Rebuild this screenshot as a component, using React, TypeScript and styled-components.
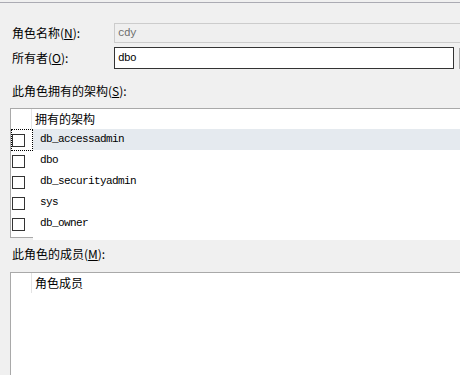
import React from "react";
import styled, { createGlobalStyle } from "styled-components";

const GlobalStyle = createGlobalStyle`
  html, body {
    margin: 0;
    padding: 0;
    background: #f0f0f0;
  }
  body {
    font-family: "Noto Sans CJK SC", "Noto Sans", sans-serif;
    font-size: 12px;
    color: #000;
  }
`;

const Window = styled.div`
  width: 460px;
  height: 375px;
  overflow: hidden;
  padding-top: 2px;
  box-sizing: border-box;
  background: #f0f0f0;
`;

const Panel = styled.div`
  border-top: 1px solid #ababb3;
  height: 100%;
  display: flex;
  flex-direction: column;
  padding-left: 10px;
`;

const FormGrid = styled.div`
  display: grid;
  grid-template-columns: 102px 1fr;
  row-gap: 4px;
  padding: 20px 0 0 2px;
  align-items: center;
`;

const Label = styled.label`
  line-height: 16px;
  white-space: nowrap;
`;

const SectionLabel = styled.div<{ $top: number; $bottom: number }>`
  line-height: 16px;
  padding-left: 2px;
  margin-top: ${(p) => p.$top}px;
  margin-bottom: ${(p) => p.$bottom}px;
`;

const FieldRow = styled.div`
  display: flex;
  align-items: flex-start;
  gap: 5px;
`;

const TextField = styled.div<{ $disabled?: boolean }>`
  box-sizing: border-box;
  height: ${(p) => (p.$disabled ? 20 : 22)}px;
  width: ${(p) => (p.$disabled ? "400px" : "340px")};
  flex: none;
  border: 1px solid ${(p) => (p.$disabled ? "#cccccc" : "#333333")};
  background: ${(p) => (p.$disabled ? "#efefef" : "#ffffff")};
  color: ${(p) => (p.$disabled ? "#6d6d6d" : "#000")};
  font-family: "Liberation Mono", "DejaVu Sans Mono", monospace;
  font-size: 11px;
  letter-spacing: -0.6px;
  line-height: ${(p) => (p.$disabled ? 18 : 20)}px;
  padding-left: 3px;
`;

const BrowseButton = styled.div`
  width: 24px;
  height: 21px;
  margin-top: 1px;
  box-sizing: border-box;
  border: 1px solid #adadad;
  background: #e1e1e1;
  flex: none;
`;

const Grid = styled.div<{ $fill?: boolean }>`
  box-sizing: border-box;
  width: 456px;
  border: 1px solid #a9a9a9;
  background: #fff;
  flex: ${(p) => (p.$fill ? "1" : "none")};
`;

const HeaderRow = styled.div`
  display: grid;
  grid-template-columns: 21px 1fr;
  height: 20px;
`;

const HeaderSpacer = styled.div`
  border-right: 1px solid #e3e3e3;
`;

const HeaderCell = styled.div`
  padding-left: 3px;
  line-height: 20px;
  white-space: nowrap;
`;

const Row = styled.div<{ $stub?: boolean }>`
  display: grid;
  grid-template-columns: 22px 1fr;
  height: ${(p) => (p.$stub ? 3 : 21)}px;
`;

const CheckCell = styled.div<{ $focused?: boolean }>`
  box-sizing: border-box;
  border: 1px dotted ${(p) => (p.$focused ? "#000" : "transparent")};
  padding: 4px 0 0 0;
`;

const CheckBox = styled.span`
  display: block;
  width: 13px;
  height: 13px;
  box-sizing: border-box;
  border: 1px solid #333;
  background: #fff;
`;

const NameCell = styled.div<{ $selected?: boolean; $stub?: boolean }>`
  box-sizing: border-box;
  background: ${(p) => (p.$selected ? "#e5eaef" : "#fff")};
  border-bottom: ${(p) => (p.$stub ? "none" : "1px solid #eeeeee")};
  padding-left: 7px;
  font-family: "Liberation Mono", "DejaVu Sans Mono", monospace;
  font-size: 11px;
  letter-spacing: -0.6px;
  line-height: 21px;
`;

const schemas = ["db_accessadmin", "dbo", "db_securityadmin", "sys", "db_owner"];

export default function App() {
  return (
    <>
      <GlobalStyle />
      <Window>
        <Panel>
          <FormGrid>
            <Label>
              角色名称(<u>N</u>):
            </Label>
            <FieldRow>
              <TextField $disabled>cdy</TextField>
            </FieldRow>
            <Label>
              所有者(<u>O</u>):
            </Label>
            <FieldRow>
              <TextField>dbo</TextField>
              <BrowseButton />
            </FieldRow>
          </FormGrid>

          <SectionLabel $top={14} $bottom={9}>
            此角色拥有的架构(<u>S</u>):
          </SectionLabel>
          <Grid>
            <HeaderRow>
              <HeaderSpacer />
              <HeaderCell>拥有的架构</HeaderCell>
            </HeaderRow>
            {schemas.map((name, i) => (
              <Row key={name}>
                <CheckCell $focused={i === 0}>
                  <CheckBox />
                </CheckCell>
                <NameCell $selected={i === 0}>{name}</NameCell>
              </Row>
            ))}
            <Row $stub>
              <CheckCell />
              <NameCell $stub />
            </Row>
          </Grid>

          <SectionLabel $top={8} $bottom={10}>
            此角色的成员(<u>M</u>):
          </SectionLabel>
          <Grid $fill>
            <HeaderRow>
              <HeaderSpacer />
              <HeaderCell>角色成员</HeaderCell>
            </HeaderRow>
          </Grid>
        </Panel>
      </Window>
    </>
  );
}
